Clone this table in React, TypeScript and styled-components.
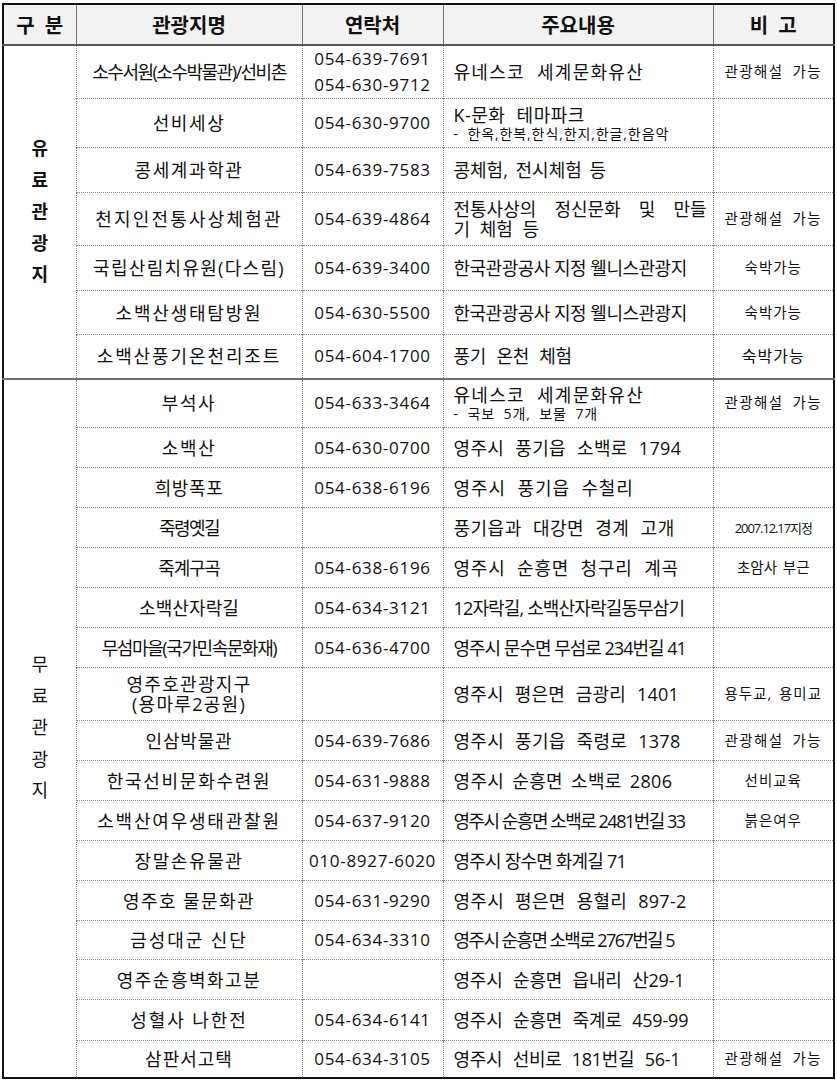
import React from "react"
import styled, {createGlobalStyle, css} from "styled-components"

const GlobalStyle = createGlobalStyle`
  html, body {
    margin: 0;
    padding: 0;
    background: #fff;
  }
  body {
    font-family: "Open Sans", "Noto Sans CJK KR", sans-serif;
    color: #111;
  }
`;

const Page = styled.div`
  padding: 3px 0 0 2px;
`;

const Table = styled.table`
  width: 833px;
  border-collapse: collapse;
  table-layout: fixed;
  border: 2px solid #111;
`;

const HeadRow = styled.tr`
  height: 41px;
  background: #f2f2f2;
`;

const HeadCell = styled.th<{spread?: boolean}>`
  font-size: 20px;
  font-weight: 700;
  text-align: center;
  padding: 0;
  border-left: 1px solid #777;
  border-bottom: 2px solid #555;
  letter-spacing: ${p => p.spread ? "10px" : "0"};
  text-indent: ${p => p.spread ? "10px" : "0"};
`;

const Row = styled.tr<{first?: boolean}>`
  ${p => p.first && css`
    border-top: 2px solid #6e6e6e;
  `}
`;

const GroupCell = styled.td<{bold?: boolean}>`
  text-align: center;
  vertical-align: middle;
  font-size: 18px;
  font-weight: ${p => p.bold ? 700 : 400};
  line-height: 31.5px;
  padding: 0;
  border-right: 1px dotted #888;
`;

type Align = "left" | "center";

const Cell = styled.td<{align?: Align; size?: number; sp?: number; ws?: number; lh?: number; top?: boolean}>`
  text-align: ${p => p.align || "center"};
  vertical-align: middle;
  font-size: ${p => p.size || 18}px;
  letter-spacing: ${p => p.sp ?? 0}px;
  word-spacing: ${p => p.ws ?? 0}px;
  line-height: ${p => p.lh || 20}px;
  padding: ${p => p.align === "left" ? "0 6px 0 10px" : "0"};
  border-left: 1px dotted #888;
  border-top: ${p => p.top ? "none" : "1px dotted #888"};
  white-space: nowrap;
  overflow: hidden;
`;

const Sub = styled.span`
  display: block;
  font-size: 14px;
  line-height: 17px;
  letter-spacing: 0.9px;
  word-spacing: 4px;
`;

const Line = styled.span<{justify?: boolean}>`
  display: block;
  ${p => p.justify && css`
    text-align: justify;
    text-align-last: justify;
  `}
`;

const PhoneLines = styled.span`
  display: block;
  line-height: 26px;
`;

interface Item {
  name: React.ReactNode;
  nameSp?: number;
  phone?: React.ReactNode;
  info: React.ReactNode;
  infoSp?: number;
  infoWs?: number;
  note?: string;
  noteSize?: number;
  noteSp?: number;
  h: number;
}

const paid: Item[] = [
  {
    name: "소수서원(소수박물관)/선비촌", nameSp: -1.5,
    phone: <PhoneLines>054-639-7691<br/>054-630-9712</PhoneLines>,
    info: "유네스코 세계문화유산", infoSp: 1.3, infoWs: 6,
    note: "관광해설 가능", h: 53,
  },
  {
    name: "선비세상",
    phone: "054-630-9700",
    info: <><Line>K-문화 테마파크</Line><Sub>- 한옥,한복,한식,한지,한글,한음악</Sub></>, infoSp: 0.5, infoWs: 6,
    h: 49,
  },
  {name: "콩세계과학관", phone: "054-639-7583", info: "콩체험, 전시체험 등", infoWs: 3, h: 45},
  {
    name: "천지인전통사상체험관", nameSp: 2.2,
    phone: "054-639-4864",
    info: <><Line justify>전통사상의 정신문화 및 만들</Line><Line>기 체험 등</Line></>, infoWs: 5,
    note: "관광해설 가능", h: 53,
  },
  {name: "국립산림치유원(다스림)", nameSp: 1.3, phone: "054-639-3400", info: "한국관광공사 지정 웰니스관광지", infoSp: -0.5, note: "숙박가능", h: 45},
  {name: "소백산생태탐방원", nameSp: 1.8, phone: "054-630-5500", info: "한국관광공사 지정 웰니스관광지", infoSp: -0.5, note: "숙박가능", h: 44},
  {name: "소백산풍기온천리조트", nameSp: 1.9, phone: "054-604-1700", info: "풍기 온천 체험", infoSp: -0.3, infoWs: 6, note: "숙박가능", noteSize: 16, h: 44},
];

const free: Item[] = [
  {
    name: "부석사", phone: "054-633-3464",
    info: <><Line>유네스코 세계문화유산</Line><Sub>- 국보 5개, 보물 7개</Sub></>, infoSp: 1.3, infoWs: 6,
    note: "관광해설 가능", h: 49,
  },
  {name: "소백산", phone: "054-630-0700", info: "영주시 풍기읍 소백로 1794", infoSp: 0.35, infoWs: 6, h: 40},
  {name: "희방폭포", nameSp: 0.6, phone: "054-638-6196", info: "영주시 풍기읍 수철리", infoSp: 0.9, infoWs: 6, h: 40},
  {name: "죽령옛길", nameSp: -1.6, info: "풍기읍과 대강면 경계 고개", infoSp: 0.5, infoWs: 6, note: "2007.12.17지정", noteSize: 13, noteSp: -1.1, h: 40},
  {name: "죽계구곡", nameSp: -1.2, phone: "054-638-6196", info: "영주시 순흥면 청구리 계곡", infoSp: 0.8, infoWs: 6, note: "초암사 부근", noteSp: 0, h: 40},
  {name: "소백산자락길", nameSp: 0.1, phone: "054-634-3121", info: "12자락길, 소백산자락길동무삼기", infoSp: -0.85, h: 40},
  {name: "무섬마을(국가민속문화재)", nameSp: -1.4, phone: "054-636-4700", info: "영주시 문수면 무섬로 234번길 41", infoSp: -1.0, h: 40},
  {name: <><Line>영주호관광지구</Line><Line>(용마루2공원)</Line></>, nameSp: 1.3, info: "영주시 평은면 금광리 1401", infoSp: 0.2, infoWs: 6, note: "용두교, 용미교", h: 53},
  {name: "인삼박물관", nameSp: 0.8, phone: "054-639-7686", info: "영주시 풍기읍 죽령로 1378", infoSp: 0.3, infoWs: 6, note: "관광해설 가능", h: 40},
  {name: "한국선비문화수련원", nameSp: 1.7, phone: "054-631-9888", info: "영주시 순흥면 소백로 2806", infoSp: 0.35, infoWs: 3, note: "선비교육", h: 40},
  {name: "소백산여우생태관찰원", nameSp: 1.8, phone: "054-637-9120", info: "영주시 순흥면 소백로 2481번길 33", infoSp: -1.5, note: "붉은여우", h: 40},
  {name: "장말손유물관", phone: "010-8927-6020", info: "영주시 장수면 화계길 71", infoSp: -0.8, h: 40},
  {name: "영주호 물문화관", nameSp: 1.4, phone: "054-631-9290", info: "영주시 평은면 용혈리 897-2", infoSp: 0.3, infoWs: 6, h: 40},
  {name: "금성대군 신단", nameSp: 1.9, phone: "054-634-3310", info: "영주시 순흥면 소백로 2767번길 5", infoSp: -1.6, h: 39},
  {name: "영주순흥벽화고분", nameSp: 1.5, info: "영주시 순흥면 읍내리 산29-1", infoSp: -0.2, infoWs: 6, h: 40},
  {name: "성혈사 나한전", nameSp: 1.9, phone: "054-634-6141", info: "영주시 순흥면 죽계로 459-99", infoSp: -0.2, infoWs: 6, h: 41},
  {name: "삼판서고택", nameSp: 1, phone: "054-634-3105", info: "영주시 선비로 181번길 56-1", infoSp: -0.3, infoWs: 6, note: "관광해설 가능", h: 37},
];

const VerticalLabel = ({text}: {text: string}) => (
  <>
    {text.split("").map((ch, i) => (
      <React.Fragment key={i}>{ch}{i < text.length - 1 && <br/>}</React.Fragment>
    ))}
  </>
);

const renderRows = (items: Item[], label: string, bold: boolean) =>
  items.map((it, i) => {
    const top = i === 0;
    const wide = it.note === "관광해설 가능";
    return (
      <Row key={i} first={top} style={{height: it.h}}>
        {top && (
          <GroupCell rowSpan={items.length} bold={bold}>
            <VerticalLabel text={label}/>
          </GroupCell>
        )}
        <Cell top={top} sp={it.nameSp ?? 1.6}>{it.name}</Cell>
        <Cell top={top} size={17} sp={0.7}>{it.phone}</Cell>
        <Cell top={top} align="left" sp={it.infoSp} ws={it.infoWs}>{it.info}</Cell>
        <Cell
          top={top}
          size={it.noteSize || 14.5}
          sp={it.noteSp ?? (wide ? 1.4 : 1)}
          ws={wide ? 4 : 2}
        >
          {it.note}
        </Cell>
      </Row>
    );
  });

export default function App() {
  return (
    <Page>
      <GlobalStyle/>
      <Table>
        <colgroup>
          <col style={{width: 73}}/>
          <col style={{width: 226}}/>
          <col style={{width: 141}}/>
          <col style={{width: 270}}/>
          <col/>
        </colgroup>
        <thead>
          <HeadRow>
            <HeadCell spread style={{borderLeft: "none"}}>구분</HeadCell>
            <HeadCell>관광지명</HeadCell>
            <HeadCell>연락처</HeadCell>
            <HeadCell>주요내용</HeadCell>
            <HeadCell spread>비고</HeadCell>
          </HeadRow>
        </thead>
        <tbody>
          {renderRows(paid, "유료관광지", true)}
          {renderRows(free, "무료관광지", false)}
        </tbody>
      </Table>
    </Page>
  );
}
